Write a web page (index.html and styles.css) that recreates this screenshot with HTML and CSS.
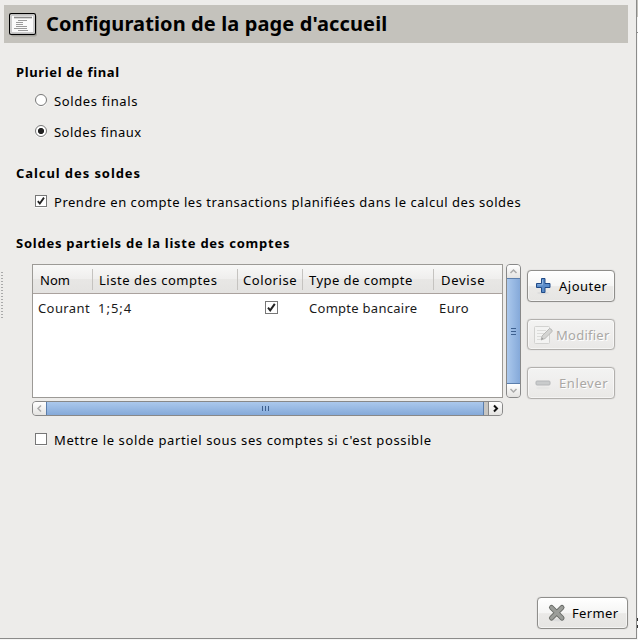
FILE: index.html
```
<!DOCTYPE html>
<html lang="fr">
<head>
<meta charset="utf-8">
<title>Configuration de la page d'accueil</title>
<link rel="stylesheet" href="styles.css">
</head>
<body>
<div class="desktop">
<main class="window">
  <header class="banner">
    <svg class="banner-icon" width="29" height="25" viewBox="0 0 29 25">
      <rect x="2" y="2" width="26" height="21.500" rx="2" fill="#a3a29c"/>
      <rect x=".6" y=".6" width="25.8" height="20.8" rx="1.500" fill="#fff" stroke="#000" stroke-width="1.200"/>
      <rect x="2.500" y="2.500" width="22" height="17" fill="#fafafa" stroke="#ccc" stroke-width="1"/>
      <path d="M5 4.500h18" stroke="#8a8a8a" stroke-width="1.600"/>
      <path d="M9 7.500h9M7 9.500h7M7 11.500h7M7 13.500h11M5 15.500h13M9 17.500h10" stroke="#999" stroke-width="1"/>
    </svg>
    <h1 class="t-title">Configuration de la page d'accueil</h1>
  </header>

  <section class="group plural">
    <h2 class="t-plural">Pluriel de final</h2>
    <label class="option"><span class="radio"></span><span class="t-finals">Soldes finals</span></label>
    <label class="option second"><span class="radio on"></span><span class="t-finaux">Soldes finaux</span></label>
  </section>

  <section class="group calc">
    <h2 class="t-calc">Calcul des soldes</h2>
    <label class="option"><span class="check"><svg width="11" height="11" viewBox="0 0 11 11"><path d="M2 5.7L4.2 8.3L8.8 1.8"/></svg></span><span class="t-plan">Prendre en compte les transactions planifiées dans le calcul des soldes</span></label>
  </section>

  <section class="group partial">
    <h2 class="t-partial">Soldes partiels de la liste des comptes</h2>
    <div class="accounts">
      <div class="grip"></div>
      <div class="list-area">
        <div class="table">
          <div class="row head">
            <span class="cell"><b class="t-nom">Nom</b></span><span class="cell"><b class="t-liste">Liste des comptes</b></span><span class="cell"><b class="t-color">Colorise</b></span><span class="cell"><b class="t-type">Type de compte</b></span><span class="cell"><b class="t-devise">Devise</b></span>
          </div>
          <div class="row data">
            <span class="cell"><b class="t-courant">Courant</b></span><span class="cell"><b class="t-nums">1;5;4</b></span><span class="cell mid"><span class="check flat"><svg width="11" height="11" viewBox="0 0 11 11"><path d="M2 5.7L4.2 8.3L8.8 1.8"/></svg></span></span><span class="cell"><b class="t-banc">Compte bancaire</b></span><span class="cell"><b class="t-euro">Euro</b></span>
          </div>
        </div>
        <div class="vbar">
          <div class="step up"><svg width="9" height="9" viewBox="0 0 9 9"><path d="M1.5 6L4.5 3L7.5 6"/></svg></div>
          <div class="thumb"><i></i><i></i><i></i></div>
          <div class="step down"><svg width="9" height="9" viewBox="0 0 9 9"><path d="M1.5 3L4.5 6L7.5 3"/></svg></div>
        </div>
        <div class="hbar">
          <div class="step left"><svg width="9" height="9" viewBox="0 0 9 9"><path d="M6 1.5L3 4.5L6 7.5"/></svg></div>
          <div class="thumb"><i></i><i></i><i></i></div>
          <div class="step right"><svg width="9" height="9" viewBox="0 0 9 9"><path d="M3 1.5L6 4.5L3 7.5"/></svg></div>
        </div>
      </div>
      <div class="actions">
        <div class="button add">
          <svg width="18" height="18" viewBox="0 0 18 18"><ellipse cx="9" cy="16" rx="6" ry="1.5" fill="#ddd"/><path d="M7.500 1.500h3.500v5h5v4h-5v5h-3.500v-5h-5v-4h5z" fill="#5b8cc9" stroke="#204a87" stroke-linejoin="round"/><path d="M8.500 2.800v5h-5" fill="none" stroke="#8db3de"/></svg>
          <span class="t-add">Ajouter</span>
        </div>
        <div class="button edit off">
          <svg width="20" height="20" viewBox="0 0 20 20"><rect x="1.5" y="1.5" width="15" height="17" rx="1" fill="#f3f3f2" stroke="#d2d2d0"/><path d="M4 5.5h9M4 8.5h7M4 11.5h4M4 14.5h3" stroke="#dcdcda"/><path d="M8 15l1-4 7.5-7.5q2.500 .3 2.800 2.800L12 13.500z" fill="#d4d4d2" stroke="#b8b8b6"/><path d="M8 15l1-2.500 1.300 1.200z" fill="#999"/></svg>
          <span class="t-edit">Modifier</span>
        </div>
        <div class="button remove off">
          <svg width="18" height="18" viewBox="0 0 18 18"><ellipse cx="9" cy="14" rx="7" ry="1.500" fill="#e6e6e5"/><rect x="2" y="7" width="14" height="4" rx="1" fill="#c9cbcc" stroke="#b4b6b8"/></svg>
          <span class="t-remove">Enlever</span>
        </div>
      </div>
    </div>
    <label class="option under"><span class="check"></span><span class="t-under">Mettre le solde partiel sous ses comptes si c'est possible</span></label>
  </section>

  <footer class="footer">
    <div class="button close">
      <svg width="19" height="20" viewBox="0 0 19 20"><ellipse cx="11" cy="17" rx="7" ry="1.500" fill="#ddd"/><path d="M4.500 4.500L15 15M15 4.500L4.500 15" stroke="#656763" stroke-width="5" stroke-linecap="round"/><path d="M4.500 4.500L15 15M15 4.500L4.500 15" stroke="#9b9d99" stroke-width="3.200" stroke-linecap="round"/></svg>
      <span class="t-close">Fermer</span>
    </div>
  </footer>
</main>
<aside class="behind"><div class="behind-top"></div><div class="behind-mid"></div><div class="behind-low"></div></aside>
</div>
</body>
</html>
```
FILE: styles.css
```
* { box-sizing: border-box; }
body { margin: 0; background: #f6f6f5; font: 13px/20px "Noto Sans", "Open Sans", sans-serif; color: #000; overflow: hidden; }
h1, h2, b { margin: 0; font-size: inherit; }
b { font-weight: 400; }
span, h1, h2 { white-space: nowrap; }
.desktop { display: flex; height: 640px; }
.window { width: 637px; height: 639px; background: #edecea; border-right: 1px solid #8b8b8a; border-bottom: 1px solid #8b8b8a; padding: 5px 8px 9px 0; display: flex; flex-direction: column; }
.behind { width: 1px; }
.behind-top { height: 17px; background: #c4c2bc; }
.behind-mid { height: 16px; border-bottom: 1px solid #8b8b8a; }
.behind-low { height: 595px; border-bottom: 10px double #333; }

.banner { height: 38px; margin-left: 4px; padding-left: 5px; background: #c4c2bc; display: flex; align-items: center; }
.banner-icon { margin-top: 2px; }
.banner h1 { margin-left: 8px; font-size: 20px; line-height: 28px; }
.group { padding-left: 16px; }
.group h2 { font-weight: 700; height: 20px; }
.plural { margin-top: 19px; }
.calc { margin-top: 21px; }
.partial { margin-top: 21px; }
.option { display: flex; height: 20px; margin: 9px 0 0 19px; gap: 7px; }
.option.second { margin-top: 11px; }
.radio, .check { width: 12px; height: 12px; flex: none; background: #fff; border: 1px solid #777; box-shadow: 0 1px 0 #fafafa; margin-top: 3px; }
.radio { border-radius: 50%; }
.radio.on { background: radial-gradient(circle, #222 0 2.700px, #fff 3.500px); }
.check svg { display: block; width: 10px; height: 10px; }
.check path { fill: none; stroke: #222; stroke-width: 2; }
.check.flat { width: 13px; height: 13px; box-shadow: none; margin: 3px 0 0 27px; display: block; }
.check.flat svg { width: 11px; height: 11px; }

.accounts { display: flex; margin-top: 11px; margin-left: -16px; height: 152px; }
.grip { width: 2px; height: 47px; margin: 8px 29px 0 1px; background: repeating-linear-gradient(#aaa 0 1px, transparent 1px 3px); }
.list-area { display: grid; grid-template-columns: 471px 15px; grid-template-rows: 134px 15px; gap: 3px; }
.table { background: #fff; border: 1px solid #9c9a96; }
.row { display: grid; grid-template-columns: 60px 145px 65px 131px 68px; }
.head { height: 29px; background: linear-gradient(#f8f8f7, #efeeed 50%, #e8e7e5 51%, #e4e3e1); border-bottom: 1px solid #aaa29e; }
.head .cell { margin: 4px 0 3px; height: 21px; padding-left: 6px; border-right: 1px solid #c5c3c0; }
.head .cell:first-child, .head .cell:last-child { padding-left: 7px; }
.head .cell:nth-child(3) { padding-left: 5px; }
.head .cell:last-child { border: 0; }
.head b { position: relative; top: 1px; }
.data { margin-top: 4px; color: #1a1a1a; }
.data .cell { padding-left: 5px; }
.data .cell:nth-child(4) { padding-left: 6px; }
.data .mid { padding: 0; }
.vbar, .hbar { display: flex; border: 1px solid #888; border-radius: 4px; background: #c8c6c2; overflow: hidden; }
.vbar { flex-direction: column; }
.step { flex: none; display: flex; align-items: center; justify-content: center; background: linear-gradient(#fff, #e4e3e1); }
.vbar .step { height: 13px; }
.hbar .step { width: 13px; }
.step path { fill: none; stroke: #aaa; stroke-width: 1.500; }
.hbar .step.right { border-left: 1px solid #888; width: 14px; }
.step.right path { stroke: #111; stroke-width: 2; }
.thumb { display: flex; align-items: center; justify-content: center; gap: 2px; }
.vbar .thumb { flex: 1; flex-direction: column; margin: 0 -1px; background: linear-gradient(90deg, #abc8ec, #98b9e3 50%, #85a9d9); border: 1px solid #5b7eac; }
.hbar .thumb { flex: none; width: 438px; margin: -1px 4px -1px 0; background: linear-gradient(#abc8ec, #98b9e3 50%, #85a9d9); border: 1px solid #5b7eac; }
.thumb i { background: #3d608f; }
.vbar i { width: 5px; height: 1px; }
.hbar i { width: 1px; height: 5px; }
.actions { margin: 6px 0 0 6px; width: 88px; }
.button { border: 1px solid #8f8e8b; border-radius: 4px; height: 32px; display: flex; align-items: center; background: linear-gradient(#fff, #f5f5f4 50%, #eae9e7 52%, #e6e5e3); box-shadow: inset 0 0 0 1px #fff8, 0 0 1px #aaa; }
.add { padding-left: 6px; gap: 7px; }
.off { color: #aaa8a5; text-shadow: 1px 1px 0 #fff; background: linear-gradient(#f3f3f2, #efeeed 50%, #e9e8e6); border-color: #b2b0ad; }
.edit { height: 31px; margin-top: 17px; padding-left: 5px; gap: 3px; }
.remove { margin-top: 17px; padding-left: 6px; gap: 7px; }
.under { margin-top: 14px; }
.footer { margin-top: auto; display: flex; justify-content: flex-end; }
.close { width: 91px; padding-left: 9px; gap: 6px; }

/* Tracking of each text */
.t-title { letter-spacing: .11px; }
.t-plural { letter-spacing: .64px; }
.t-finals { letter-spacing: .62px; }
.t-finaux { letter-spacing: .48px; }
.t-calc { letter-spacing: .92px; }
.t-plan { letter-spacing: .52px; }
.t-partial { letter-spacing: .75px; }
.t-under { letter-spacing: .62px; }
.t-liste { letter-spacing: .54px; }
.t-color { letter-spacing: .57px; }
.t-type { letter-spacing: .46px; }
.t-devise { letter-spacing: .7px; }
.t-courant { letter-spacing: .4px; }
.t-nums { letter-spacing: 1px; }
.t-banc { letter-spacing: .28px; }
.t-euro { letter-spacing: .5px; }
.t-add { letter-spacing: .5px; }
.t-edit { letter-spacing: .25px; }
.t-remove { letter-spacing: .6px; }
.t-close { letter-spacing: .35px; }
```
